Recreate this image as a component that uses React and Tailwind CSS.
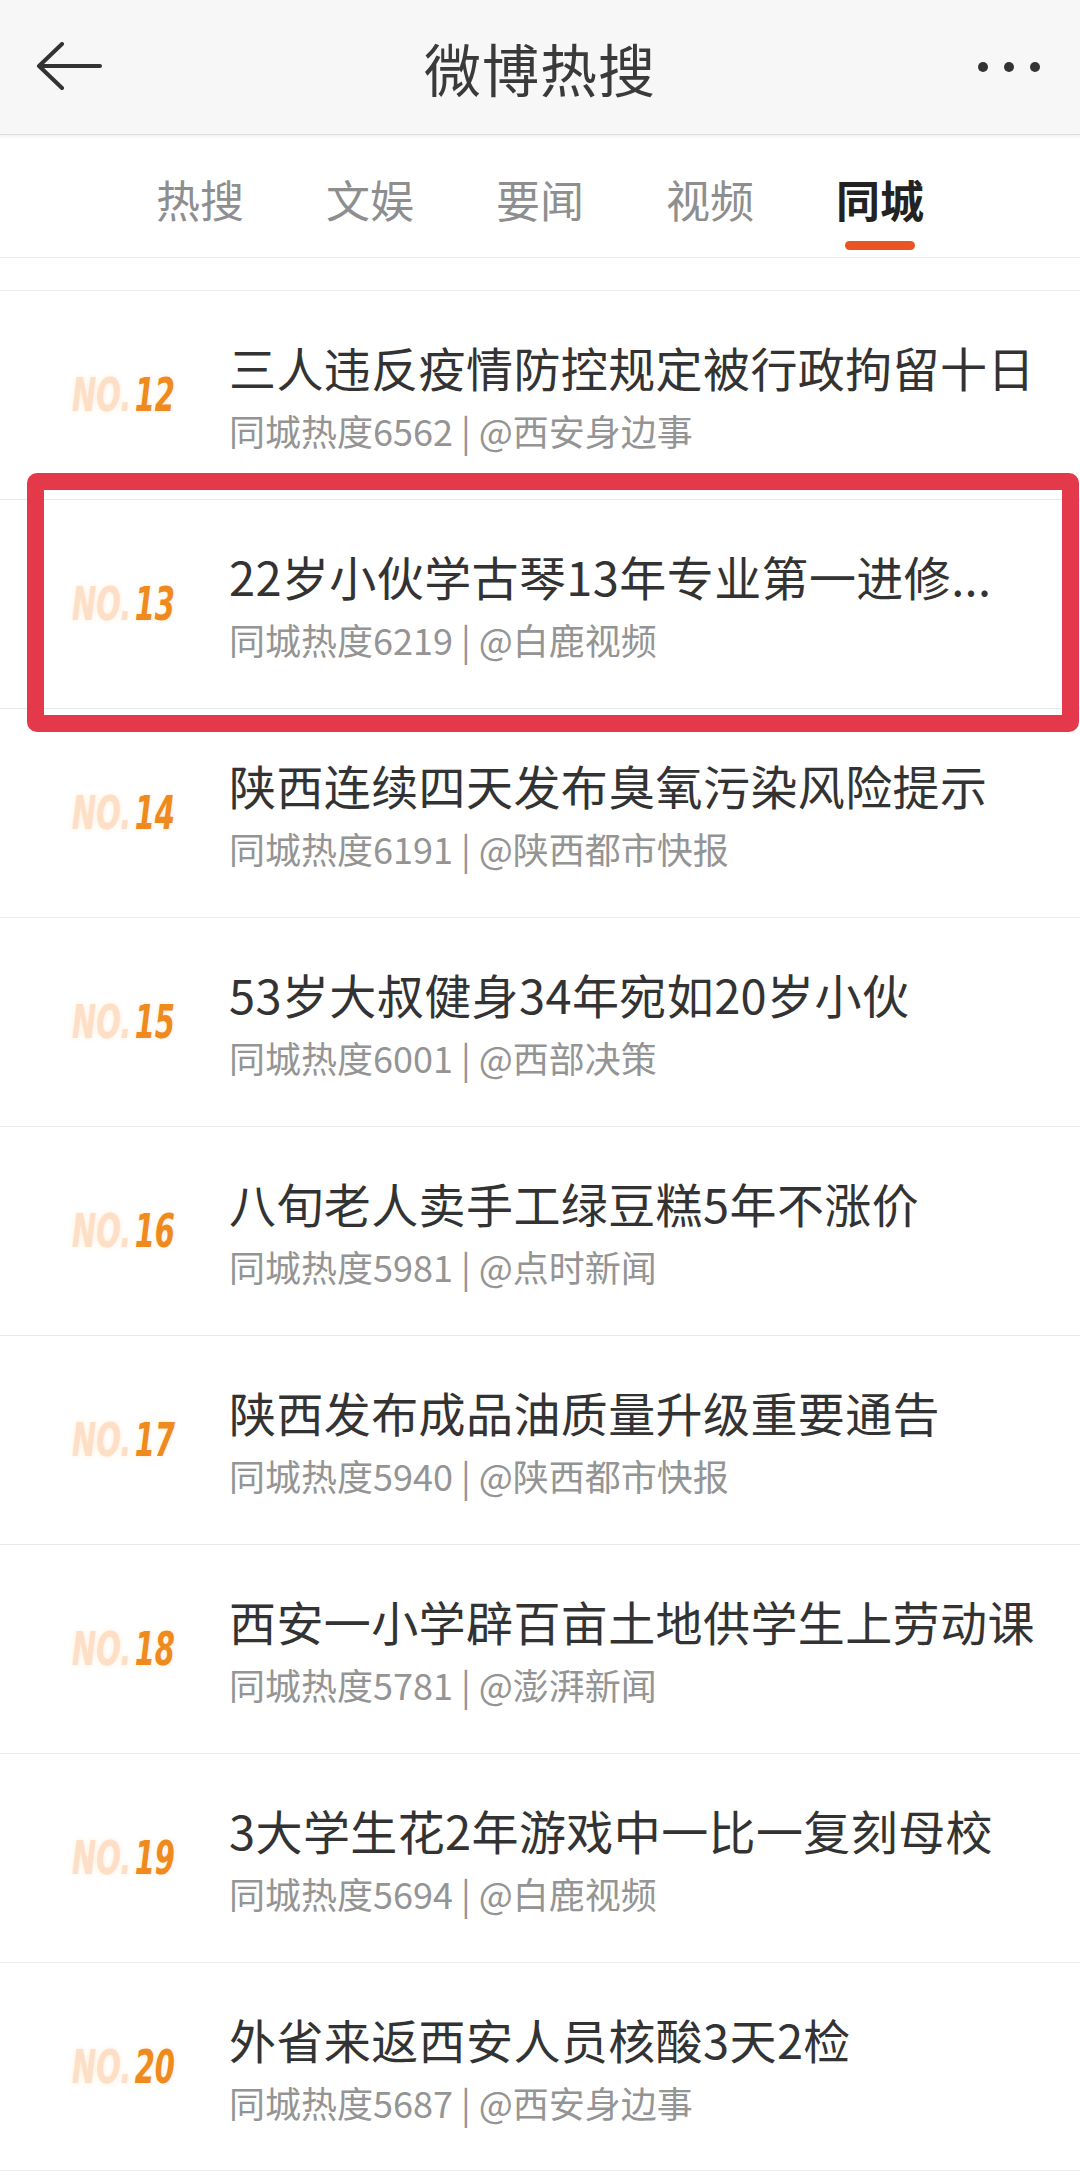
import React from 'react';

const tabs = ['热搜', '文娱', '要闻', '视频', '同城'];

const items = [
  { no: 12, title: '三人违反疫情防控规定被行政拘留十日', heat: 6562, from: '西安身边事' },
  { no: 13, title: '22岁小伙学古琴13年专业第一进修...', heat: 6219, from: '白鹿视频' },
  { no: 14, title: '陕西连续四天发布臭氧污染风险提示', heat: 6191, from: '陕西都市快报' },
  { no: 15, title: '53岁大叔健身34年宛如20岁小伙', heat: 6001, from: '西部决策' },
  { no: 16, title: '八旬老人卖手工绿豆糕5年不涨价', heat: 5981, from: '点时新闻' },
  { no: 17, title: '陕西发布成品油质量升级重要通告', heat: 5940, from: '陕西都市快报' },
  { no: 18, title: '西安一小学辟百亩土地供学生上劳动课', heat: 5781, from: '澎湃新闻' },
  { no: 19, title: '3大学生花2年游戏中一比一复刻母校', heat: 5694, from: '白鹿视频' },
  { no: 20, title: '外省来返西安人员核酸3天2检', heat: 5687, from: '西安身边事' },
];

function Badge({ no }) {
  return (
    <div className="w-[229px] shrink-0 pl-[72px] flex items-center">
      <div className="origin-left scale-x-[0.7] whitespace-nowrap italic font-bold text-[46px] leading-none [font-family:'DejaVu_Sans_Condensed','DejaVu_Sans',sans-serif] [text-shadow:0_0_6px_rgba(255,228,196,0.7)]">
        <span className="text-[#fcdfc6]">NO.</span>
        <span className="text-[#ee8a1e] ml-[5px]">{no}</span>
      </div>
    </div>
  );
}

function Row({ item, last }) {
  return (
    <div className={`h-[209px] border-t border-[#e9e9e9] flex items-center ${last ? 'border-b' : ''}`}>
      <Badge no={item.no} />
      <div className="flex flex-col min-w-0">
        <p className="text-[47px] leading-[60px] tracking-[0.4px] text-[#333333] whitespace-nowrap">{item.title}</p>
        <p className="text-[36px] leading-[46px] text-[#949494] mt-[10px] whitespace-nowrap">
          同城热度{item.heat} | @{item.from}
        </p>
      </div>
    </div>
  );
}

export default function App() {
  return (
    <div className="relative w-[1080px] bg-white overflow-hidden [font-family:'Noto_Sans_CJK_SC','Noto_Sans',sans-serif]">
      {/* Header */}
      <div className="h-[135px] bg-[#f7f7f7] border-b border-[#dcdcdc] shadow-[0_2px_3px_rgba(0,0,0,0.06)] flex items-center justify-between px-[36px] relative">
        <svg width="66" height="50" viewBox="0 0 66 50">
          <path d="M26 2 L3 24 L26 46 M3 24 H64" fill="none" stroke="#333" strokeWidth="4" strokeLinecap="round" strokeLinejoin="round" />
        </svg>
        <h1 className="absolute left-1/2 -translate-x-1/2 text-[57px] leading-none text-[#3a3a3a] tracking-[1px]">微博热搜</h1>
        <div className="flex gap-[16px] mr-[4px]">
          <span className="w-[10px] h-[10px] rounded-full bg-[#333]" />
          <span className="w-[10px] h-[10px] rounded-full bg-[#333]" />
          <span className="w-[10px] h-[10px] rounded-full bg-[#333]" />
        </div>
      </div>

      {/* Tabs */}
      <div className="h-[123px] border-b border-[#ececec] flex justify-center gap-[82px] pt-[38px]">
        {tabs.map((t) => (
          <div key={t} className="flex flex-col items-center">
            <span className={`text-[44px] leading-[52px] ${t === '同城' ? 'font-bold text-[#222]' : 'text-[#8e8e8e]'}`}>{t}</span>
            {t === '同城' && <span className="mt-[16px] w-[70px] h-[9px] rounded-full bg-[#ea5420]" />}
          </div>
        ))}
      </div>

      {/* List */}
      <div className="h-[32px]" />
      {items.map((item, i) => (
        <Row key={item.no} item={item} last={i === items.length - 1} />
      ))}

      {/* Highlight box */}
      <div className="absolute left-[27px] top-[473px] w-[1052px] h-[259px] border-[17px] border-[#e3394a] rounded-[10px] pointer-events-none" />
    </div>
  );
}
